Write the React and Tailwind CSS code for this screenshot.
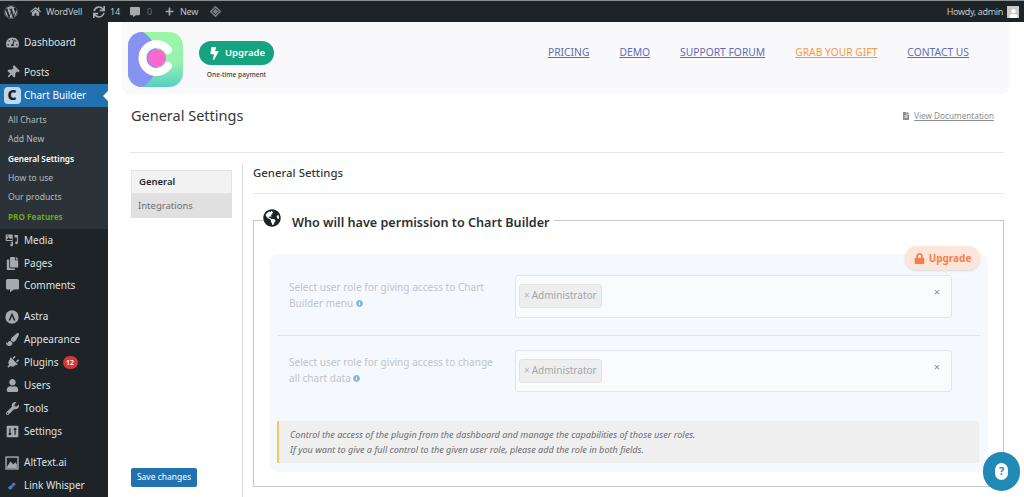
// Chart Builder - General Settings page inside wp-admin
import React from 'react';
import {
  FaWordpress, FaHome, FaSync, FaCommentAlt, FaPlus, FaTachometerAlt, FaThumbtack, FaCopy, FaPaintBrush,
  FaPlug, FaUser, FaWrench, FaGlobeAmericas, FaLock, FaBolt, FaFileAlt, FaInfoCircle,
} from 'react-icons/fa';

const font = "font-['Noto_Sans','Open_Sans',sans-serif]";

function MediaIcon() {
  return (
    <svg viewBox="0 0 20 20" className="w-[14px] h-[14px]">
      <path d="M1 2h10v9.5H1z M3 3.5v1.5h2v-1.5z" fill="#a7aaad" fillRule="evenodd" />
      <path d="M2 10l3-4 2.5 3 1.5-1.5 2 2.5z" fill="#1d2327" />
      <path d="M13 3h5.5v11a2 2 0 1 1-1.5-1.9V6.5h-3z" fill="#a7aaad" />
      <path d="M8 12.5h3.5V17a2 2 0 1 1-1.5-1.9v-1.1H8z" fill="#a7aaad" />
    </svg>
  );
}

function AstraIcon() {
  return (
    <svg viewBox="0 0 20 20" className="w-[14px] h-[14px]">
      <circle cx="10" cy="10" r="9.5" fill="#a7aaad" />
      <path d="M10 4 L15 15 H12.6 L10 9 L7.4 15 H5 Z" fill="#1d2327" />
    </svg>
  );
}

function SettingsIcon() {
  return (
    <svg viewBox="0 0 20 20" className="w-[13px] h-[13px]">
      <rect x="1" y="1" width="18" height="18" rx="1.5" fill="#a7aaad" />
      <path d="M6 5v10M6 15l-2-2M6 15l2-2M14 15V5M14 5l-2 2M14 5l2 2" stroke="#1d2327" strokeWidth="1.8" fill="none" />
    </svg>
  );
}

function AltTextIcon() {
  return (
    <svg viewBox="0 0 20 20" className="w-[14px] h-[14px]">
      <rect x="1.5" y="1.5" width="17" height="17" fill="#1d2327" stroke="#a7aaad" strokeWidth="2" />
      <path d="M3 15 L8 8 L12 12 L15 9 L17 12 V17 H3 Z" fill="#a7aaad" />
    </svg>
  );
}

function LinkWhisperIcon() {
  return (
    <svg viewBox="0 0 20 20" className="w-[12px] h-[12px]">
      <path d="M4 13 L13 4 L16 7 L8 16 Z" fill="#4a63c9" />
      <circle cx="7" cy="13" r="3" fill="#2f8fd0" />
      <circle cx="13" cy="7" r="2.4" fill="#7a5bd0" />
    </svg>
  );
}

function ChartBuilderIcon() {
  return (
    <span className="flex items-center justify-center w-[17px] h-[17px] rounded-[4px] bg-[#bcd9f0] text-[#1d2327] text-[14px] font-black leading-none">
      C
    </span>
  );
}

function MenuItem({ icon, label, badge, className = '' }) {
  return (
    <div className={`flex items-center h-[23px] text-[10px] text-[#dfe1e3] ${className}`}>
      <span className="flex justify-center items-center w-[24px] text-[#a7aaad] text-[13px] shrink-0">{icon}</span>
      <span>{label}</span>
      {badge && (
        <span className="ml-[4px] flex items-center justify-center w-[15px] h-[13px] rounded-full bg-[#d63638] text-white text-[7px] font-semibold">
          {badge}
        </span>
      )}
    </div>
  );
}

function Sidebar() {
  return (
    <aside className="w-[108px] shrink-0 bg-[#1d2327] flex flex-col pt-[9px]">
      <MenuItem icon={<FaTachometerAlt />} label="Dashboard" />
      <MenuItem icon={<FaThumbtack className="rotate-45" />} label="Posts" className="mt-[7px]" />
      <div className="relative flex items-center h-[23px] bg-[#2271b1] text-white text-[10px]">
        <span className="flex justify-center w-[24px]"><ChartBuilderIcon /></span>
        <span>Chart Builder</span>
        <span className="absolute right-0 top-[7px] border-y-[5px] border-y-transparent border-r-[5px] border-r-white" />
      </div>
      <div className="bg-[#2c3338] flex flex-col pl-[8px] pt-[4px] h-[122px] text-[8.6px] text-[#b6babd]">
        <div className="h-[19.3px] flex items-center">All Charts</div>
        <div className="h-[19.3px] flex items-center">Add New</div>
        <div className="h-[19.3px] flex items-center text-white font-semibold text-[8.2px]">General Settings</div>
        <div className="h-[19.3px] flex items-center">How to use</div>
        <div className="h-[19.3px] flex items-center">Our products</div>
        <div className="h-[19.3px] flex items-center text-[#6aa51f] font-bold text-[8.2px]">PRO Features</div>
      </div>
      <MenuItem icon={<MediaIcon />} label="Media" />
      <MenuItem icon={<FaCopy />} label="Pages" />
      <MenuItem icon={<FaCommentAlt />} label="Comments" />
      <MenuItem icon={<AstraIcon />} label="Astra" className="mt-[8px]" />
      <MenuItem icon={<FaPaintBrush />} label="Appearance" />
      <MenuItem icon={<FaPlug className="rotate-45" />} label="Plugins" badge="12" />
      <MenuItem icon={<FaUser />} label="Users" />
      <MenuItem icon={<FaWrench />} label="Tools" />
      <MenuItem icon={<SettingsIcon />} label="Settings" />
      <MenuItem icon={<AltTextIcon />} label="AltText.ai" className="mt-[8px]" />
      <MenuItem icon={<LinkWhisperIcon />} label="Link Whisper" />
    </aside>
  );
}

function AdminBar() {
  return (
    <header className="h-[22px] shrink-0 bg-[#1d2327] border-t border-[#8a8c8e] flex items-center text-[9px] tracking-[-0.2px] text-[#c3c5c7]">
      <span className="ml-[4px] w-[14px] text-[14px] text-[#a7aaad]"><FaWordpress /></span>
      <span className="ml-[12px] text-[11px] text-[#a7aaad]"><FaHome /></span>
      <span className="ml-[5px]">WordVell</span>
      <span className="ml-[11px] text-[12px] text-[#a7aaad]"><FaSync /></span>
      <span className="ml-[5px]">14</span>
      <span className="ml-[10px] text-[10px] text-[#a7aaad]"><FaCommentAlt /></span>
      <span className="ml-[7px] text-[#6b6f73]">0</span>
      <span className="ml-[13px] text-[9px] text-[#a7aaad]"><FaPlus /></span>
      <span className="ml-[6px]">New</span>
      <svg viewBox="0 0 20 20" className="ml-[11px] w-[13px] h-[13px]">
        <path d="M10 1 L19 10 L10 19 L1 10 Z" fill="#7b7f82" />
        <path d="M10 5 L15 10 L10 15 L5 10 Z" fill="none" stroke="#1d2327" strokeWidth="1.5" />
      </svg>
      <span className="ml-auto mr-[4px] tracking-[-0.35px]">Howdy, admin</span>
      <span className="mr-[5px] w-[12px] h-[12px] bg-[#c9c9c9] flex items-end justify-center text-white text-[9px]"><FaUser /></span>
    </header>
  );
}

function Logo() {
  return (
    <svg viewBox="0 0 55 55" className="w-[55px] h-[55px] shrink-0">
      <defs>
        <linearGradient id="logoGreen" x1="0" y1="0" x2="0" y2="1">
          <stop offset="0" stopColor="#9cf6a6" />
          <stop offset="0.55" stopColor="#98f1ae" />
          <stop offset="1" stopColor="#55d0c2" />
        </linearGradient>
        <clipPath id="logoClip"><rect width="55" height="55" rx="14" /></clipPath>
      </defs>
      <g clipPath="url(#logoClip)">
        <rect width="55" height="55" fill="url(#logoGreen)" />
        <path d="M0 0 H15 C26 8 30 18 30 27 C30 38 25 48 15 55 H0 Z" fill="#8792f2" />
      </g>
      <path d="M40 18 A14 14 0 1 0 40 34" fill="none" stroke="#fff" strokeWidth="8" strokeLinecap="round" />
      <circle cx="29" cy="26" r="9" fill="#fb68cf" />
    </svg>
  );
}

function PluginHeader() {
  const links = [
    { label: 'PRICING', cls: 'text-[#5f6db8]' },
    { label: 'DEMO', cls: 'text-[#5f6db8]' },
    { label: 'SUPPORT FORUM', cls: 'text-[#5f6db8]' },
    { label: 'GRAB YOUR GIFT', cls: 'text-[#f79a3e]' },
    { label: 'CONTACT US', cls: 'text-[#5f6db8]' },
  ];
  return (
    <div className="ml-[14px] mr-[14px] h-[72px] shrink-0 bg-[#f9f9fb] rounded-b-[8px] flex items-start pl-[6px] pt-[10px]">
      <Logo />
      <div className="ml-[16px] mt-[9px] flex flex-col items-center w-[75px]">
        <div className="w-[75px] h-[24px] rounded-full bg-[#16a37f] text-white text-[9.5px] font-semibold flex items-center justify-center gap-[4px]">
          <FaBolt className="text-[13px]" /> Upgrade
        </div>
        <div className="mt-[5px] text-[6.6px] font-medium text-[#3a3f44] whitespace-nowrap">One-time payment</div>
      </div>
      <nav className="ml-auto mr-[41px] mt-[13px] flex gap-[30px] text-[10.3px]">
        {links.map((link) => (
          <span key={link.label} className={`underline ${link.cls}`}>{link.label}</span>
        ))}
      </nav>
    </div>
  );
}

function RoleSelect() {
  return (
    <div className="relative w-[437px] h-full rounded-[3px] border border-[#e2e5ea] bg-[#fafbfd] pl-[3px] pt-[5px]">
      <span className="inline-flex items-center h-[24px] px-[4px] rounded-[3px] bg-[#eeeeef] border border-[#e3e3e5] text-[10px] text-[#a4a6a9]">
        <span className="mr-[2px] text-[#b5b5b5]">×</span>Administrator
      </span>
      <span className="absolute right-[11px] top-[8px] text-[11px] text-[#8a8d91]">×</span>
    </div>
  );
}

function RoleRow({ lines, boxHeight, top }) {
  return (
    <div className={`flex ${top}`}>
      <div className="w-[245px] pl-[19px] pt-[4px] text-[10.1px] leading-[16px] text-[#c2c4c8]">
        {lines[0]}
        <br />
        {lines[1]} <FaInfoCircle className="inline text-[7px] text-[#82b5df] align-baseline" />
      </div>
      <div className={boxHeight}><RoleSelect /></div>
    </div>
  );
}

function Settings() {
  return (
    <main className="flex-1 min-w-0 pr-[20px] flex flex-col">
      <div className="h-[18px] flex items-center text-[11.4px] font-medium text-[#33373a]">General Settings</div>
      <div className="mt-[11px] border-t border-[#e6e6e6]" />
      <fieldset className="mt-[15px] border border-[#c8c8c8] h-[278px] min-w-0 pl-[4px]">
        <legend className="ml-[5px] pr-[4px] flex items-center text-[12.6px] font-semibold text-[#2c3034] h-[22px] pt-[6px]">
          <FaGlobeAmericas className="mr-[11px] -mt-[11px] text-[18px] text-[#1d2327]" />
          Who will have permission to Chart Builder
        </legend>
        <div className="relative mt-[23px] ml-[12px] w-[718px] h-[218px] rounded-[8px] bg-[#f5f8fd] pt-[21px]">
          <span className="absolute right-[8px] -top-[8px] w-[75px] h-[24px] rounded-full bg-[#fee5d9] shadow-sm text-[#f5814a] text-[10px] font-bold flex items-center justify-center gap-[4px]">
            <FaLock className="text-[11px]" /> Upgrade
          </span>
          <RoleRow lines={['Select user role for giving access to Chart', 'Builder menu']} boxHeight="h-[43px]" top="" />
          <div className="mt-[17px] mx-[8px] border-t border-[#dfe2e6]" />
          <RoleRow lines={['Select user role for giving access to change', 'all chart data']} boxHeight="h-[42px]" top="mt-[14px]" />
          <div className="mt-[29px] ml-[7px] mr-[9px] h-[42px] bg-[#efefef] border-l-2 border-[#f7c55f] pl-[11px] pt-[6px] italic text-[9.1px] leading-[15px] text-[#6a6d70]">
            Control the access of the plugin from the dashboard and manage the capabilities of those user roles.
            <br />
            If you want to give a full control to the given user role, please add the role in both fields.
          </div>
        </div>
      </fieldset>
    </main>
  );
}

export default function App() {
  return (
    <div className={`w-[1024px] h-[497px] overflow-hidden bg-white flex flex-col relative ${font}`}>
      <AdminBar />
      <div className="flex flex-1 min-h-0">
        <Sidebar />
        <div className="flex-1 min-w-0 flex flex-col">
          <PluginHeader />
          <div className="ml-[23px] mr-[20px] h-[59px] shrink-0 border-b border-[#e6e6e6] flex items-start justify-between">
            <h1 className="mt-[11px] text-[14.5px] text-[#33373a]">General Settings</h1>
            <a className="mt-[16px] mr-[10px] flex items-center gap-[4px] text-[8.2px] text-[#8b8f93] underline">
              <FaFileAlt className="text-[8px] text-[#8b8f93]" /> View Documentation
            </a>
          </div>
          <div className="flex flex-1 min-h-0 pt-[11px]">
            <div className="ml-[23px] w-[101px] shrink-0 flex flex-col pt-[6px] pb-[10px]">
              <div className="h-[24px] pl-[7px] flex items-center bg-[#f2f2f2] border border-[#e4e4e4] text-[9.5px] font-semibold text-[#23282d]">General</div>
              <div className="h-[24px] pl-[7px] flex items-center bg-[#e0e0e0] text-[9.5px] text-[#6d7175]">Integrations</div>
              <button className="mt-auto w-[66px] h-[19px] rounded-[2px] bg-[#2271b1] text-white text-[8.5px] flex items-center justify-center">Save changes</button>
            </div>
            <div className="ml-[10px] mr-[10px] border-l border-[#dcdcdc]" />
            <Settings />
          </div>
        </div>
      </div>
      <div className="absolute left-[983px] top-[452px] w-[37px] h-[39px] rounded-full bg-[#2089b5] flex items-center justify-center">
        <span className="w-[13px] h-[17px] rounded-full bg-white text-[#2089b5] text-[11px] font-bold flex items-center justify-center">?</span>
      </div>
    </div>
  );
}
